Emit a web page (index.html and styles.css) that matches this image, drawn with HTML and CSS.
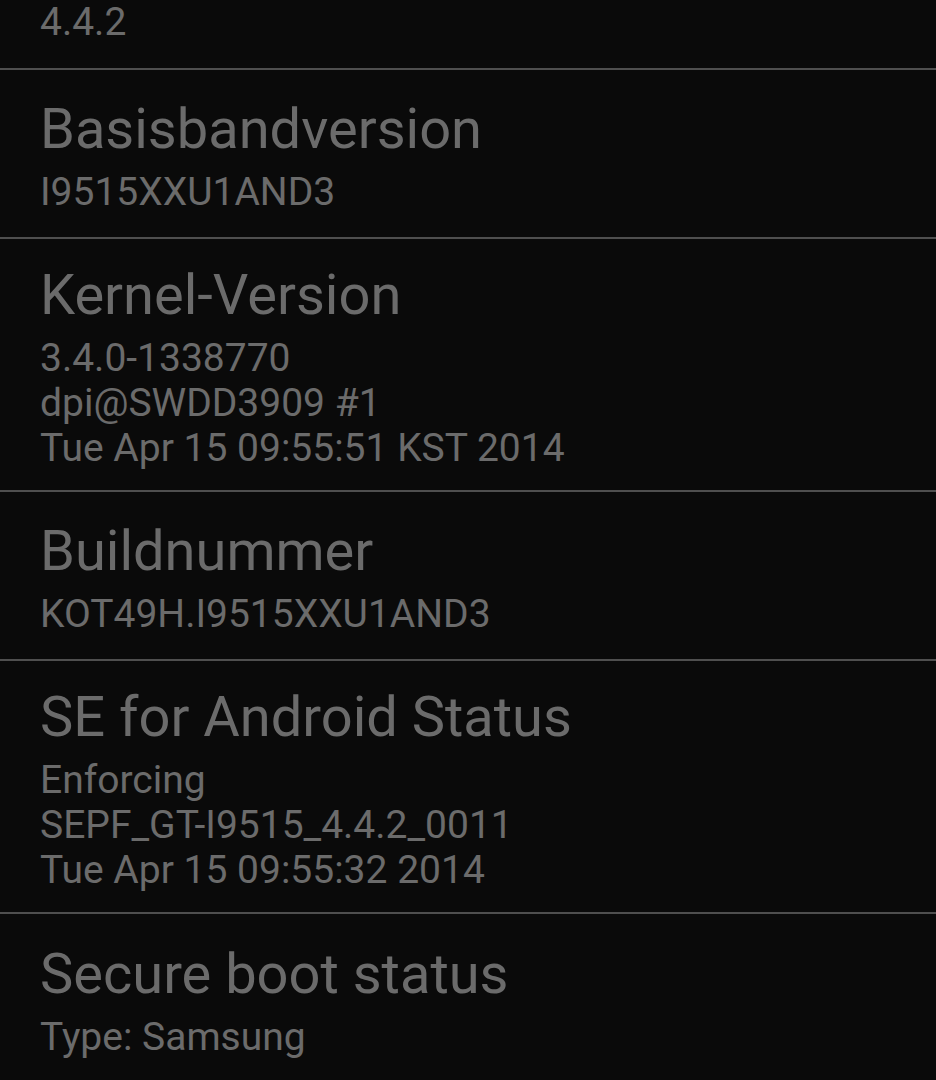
FILE: index.html
```html
<!DOCTYPE html>
<html lang="de">
<head>
<meta charset="utf-8">
<title>Geräteinformationen</title>
<link rel="stylesheet" href="styles.css">
</head>
<body>
<ul class="prefs">
  <li class="pref pref-partial">
    <div class="pref-sub">4.4.2</div>
  </li>
  <li class="pref">
    <div class="pref-title">Basisbandversion</div>
    <div class="pref-sub">I9515XXU1AND3</div>
  </li>
  <li class="pref">
    <div class="pref-title">Kernel-Version</div>
    <div class="pref-sub">3.4.0-1338770<br>dpi@SWDD3909 #1<br>Tue Apr 15 09:55:51 KST 2014</div>
  </li>
  <li class="pref">
    <div class="pref-title">Buildnummer</div>
    <div class="pref-sub">KOT49H.I9515XXU1AND3</div>
  </li>
  <li class="pref">
    <div class="pref-title">SE for Android Status</div>
    <div class="pref-sub">Enforcing<br>SEPF_GT-I9515_4.4.2_0011<br>Tue Apr 15 09:55:32 2014</div>
  </li>
  <li class="pref pref-last">
    <div class="pref-title">Secure boot status</div>
    <div class="pref-sub">Type: Samsung</div>
  </li>
</ul>
</body>
</html>
```
FILE: styles.css
```css
html, body {
  margin: 0;
  padding: 0;
  background: #0a0a0a;
  height: 100%;
  overflow: hidden;
}

body {
  font-family: Roboto, "Noto Sans", "Liberation Sans", sans-serif;
  color: #6b6b6b;
}

.prefs {
  list-style: none;
  margin: 0;
  padding: 0;
}

.pref {
  display: flex;
  flex-direction: column;
  justify-content: center;
  min-height: 169px;
  box-sizing: border-box;
  padding: 25px 20px 19px 40px;
  border-bottom: 2px solid #4f4f4f;
}

.pref-partial {
  min-height: 0;
  padding: 0 20px 23px 40px;
}

.pref-last {
  border-bottom: none;
}

.pref-title {
  font-size: 56px;
  line-height: 62px;
  margin-bottom: 10px;
  white-space: nowrap;
}

.pref-sub {
  font-size: 39px;
  line-height: 45px;
  white-space: nowrap;
}
```
